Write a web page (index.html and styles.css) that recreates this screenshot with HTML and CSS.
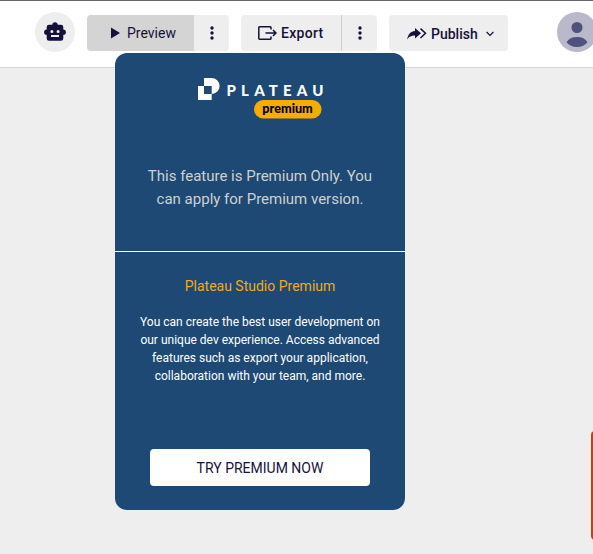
FILE: index.html
```html
<!DOCTYPE html>
<html lang="en">
<head>
<meta charset="utf-8">
<title>Plateau Studio</title>
<link rel="stylesheet" href="styles.css">
</head>
<body>
<header class="toolbar">
  <button class="bot" aria-label="Assistant">
    <svg width="22" height="20" viewBox="0 0 22 20"><path fill="#16113a" fill-rule="evenodd" d="M11 .2a2.7 2.7 0 0 1 2.7 2.6H17a2.3 2.3 0 0 1 2.3 2.3v2.5a2.6 2.6 0 0 1 0 5.2v3.7a2.3 2.3 0 0 1-2.3 2.3H5a2.3 2.3 0 0 1-2.3-2.3v-3.7a2.6 2.6 0 0 1 0-5.2V5.100A2.300 2.300 0 0 1 5 2.800h3.300A2.700 2.700 0 0 1 11 .2zM7.900 7.900a1.500 1.500 0 1 0 0 3 1.500 1.500 0 0 0 0-3zm6.200 0a1.500 1.500 0 1 0 0 3 1.500 1.500 0 0 0 0-3zM7 13v2h8v-2z"/></svg>
  </button>
  <div class="group preview">
    <button class="main active"><svg width="9" height="12" viewBox="0 0 9 12"><path d="M0 .5 9 6 0 11.500z" fill="#16113a"/></svg><span>Preview</span></button>
    <button class="more" aria-label="Preview options"><svg width="4" height="14" viewBox="0 0 4 14" fill="#16113a"><circle cx="2" cy="2" r="1.700"/><circle cx="2" cy="7" r="1.700"/><circle cx="2" cy="12" r="1.700"/></svg></button>
  </div>
  <div class="group export">
    <button class="main"><svg width="19" height="14" viewBox="0 0 19 14" fill="none" stroke="#16113a" stroke-width="1.500"><path d="M13 3.500V1.500Q13 .8 12.300.8H1.500Q.8.8.8 1.500v11q0 .7.700.7h10.800q.7 0 .7-.7v-2M7.500 7H18M15 4l3 3-3 3"/></svg><span>Export</span></button>
    <button class="more" aria-label="Export options"><svg width="4" height="14" viewBox="0 0 4 14" fill="#16113a"><circle cx="2" cy="2" r="1.700"/><circle cx="2" cy="7" r="1.700"/><circle cx="2" cy="12" r="1.700"/></svg></button>
  </div>
  <button class="publish">
    <svg width="20" height="12" viewBox="0 0 20 12"><path fill="#16113a" d="M8 0l6 5.300-6 5.200V7.600C4.500 7.500 2 8.600.2 11.500.8 6.500 3.600 3.500 8 3z"/><path fill="none" stroke="#16113a" stroke-width="1.500" d="M13.500.6l5 4.700-5 4.700"/></svg>
    <span>Publish</span>
    <svg class="chevron" width="8" height="6" viewBox="0 0 8 6"><path d="M.6 1 4 4.400 7.400 1" fill="none" stroke="#16113a" stroke-width="1.200"/></svg>
  </button>
  <div class="avatar">
    <svg width="40" height="40" viewBox="0 0 40 40"><circle cx="20" cy="20" r="20" fill="#b9b9cb"/><circle cx="20" cy="15.500" r="5.500" fill="#50517d"/><path fill="#50517d" d="M9.500 30.200C11.500 26.700 15 25 20 25s8.500 1.700 10.500 5.200C28 33.300 24.500 35 20 35S12 33.300 9.500 30.200z"/></svg>
  </div>
</header>

<section class="card">
  <div class="intro">
    <svg class="logo" width="126" height="42" viewBox="0 0 126 42">
      <path fill="#fff" fill-rule="evenodd" d="M6 0h7.500A7.800 7.800 0 0 1 13.700 16V22H0V8h6zM6 8v8h7.700V8z"/>
      <text class="brand" x="28.500" y="18" textLength="97" lengthAdjust="spacing">PLATEAU</text>
      <rect x="56" y="22" width="67.500" height="18.500" rx="9.250" fill="#f4ad00"/>
      <text class="tier" x="64.300" y="35" textLength="50.500" lengthAdjust="spacingAndGlyphs">premium</text>
    </svg>
    <p>This feature is Premium Only. You<br>can apply for Premium version.</p>
  </div>
  <div class="details">
    <h2>Plateau Studio Premium</h2>
    <p>You can create the best user development on<br>our unique dev experience. Access advanced<br>features such as export your application,<br>collaboration with your team, and more.</p>
    <button class="try">TRY PREMIUM NOW</button>
  </div>
</section>
<div class="side-tab"></div>
</body>
</html>
```
FILE: styles.css
```css
* { box-sizing: border-box; }
html, body { margin: 0; height: 100%; overflow: hidden; }
body { position: relative; background: #eeeeee; font-family: Roboto, sans-serif; color: #16113a; }
button { margin: 0; padding: 0; border: 0; font: inherit; color: inherit; background: #eeeeee; display: flex; align-items: center; }
svg { display: block; flex: none; }
.toolbar { height: 68px; width: 620px; background: #fff; border-top: 1px solid #666; border-bottom: 1px solid #d4d4d4; display: flex; align-items: flex-start; padding: 11px 0 0 35px; font-size: 14px; font-weight: 500; }
.bot { width: 40px; height: 40px; border-radius: 50%; justify-content: center; }
.group, .publish { height: 36px; margin: 3px 0 0 12px; border-radius: 4px; }
.group { display: flex; overflow: hidden; }
.main { height: 36px; }
.preview .main { width: 107px; padding-left: 24px; gap: 7px; font-weight: 400; }
.main.active { background: #d4d4d4; }
.more { width: 35px; justify-content: center; }
.export .main { width: 100px; padding-left: 17px; gap: 4px; letter-spacing: .3px; }
.export .more { width: 36px; border-left: 1px solid #d0d0d0; }
.publish { width: 119px; padding: 2px 0 0 18px; gap: 4px; }
.chevron { margin-left: 4px; }
.avatar { margin-left: 49px; }
.card { position: absolute; left: 115px; top: 53px; width: 290px; height: 457px; border-radius: 12px; background: #1d4974; text-align: center; overflow: hidden; }
.intro { height: 199px; border-bottom: 1px solid #fff; padding-top: 25px; }
.logo { margin-left: 83px; overflow: visible; }
.brand { font: 900 15px Lato, sans-serif; fill: #fff; }
.tier { font: 900 13px Lato, sans-serif; fill: #000; }
.intro p { margin: 45px 0 0; font-size: 15px; line-height: 23px; color: #d0d0d0; white-space: nowrap; }
.details { padding-top: 25px; display: flex; flex-direction: column; align-items: center; }
.details h2 { margin: 0; font-size: 14px; font-weight: 400; line-height: 18px; color: #f2a91e; }
.details p { margin: 18px 0 0; font-size: 12px; line-height: 18px; color: #fff; white-space: nowrap; }
.try { width: 220px; height: 37px; margin-top: 64px; border-radius: 4px; background: #fff; justify-content: center; font-size: 14px; }
.side-tab { position: absolute; left: 591px; top: 431px; width: 20px; height: 109px; border-radius: 4px 0 0 4px; background: #d4380d; }
```
